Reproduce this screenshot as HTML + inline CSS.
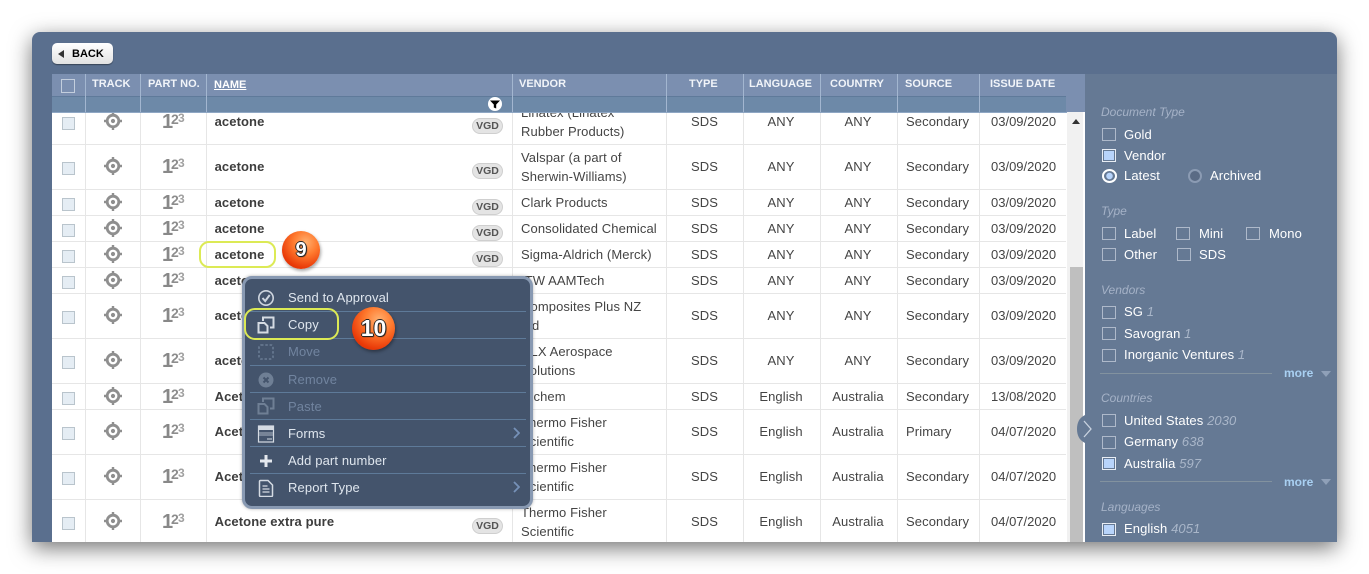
<!DOCTYPE html>
<html><head><meta charset="utf-8"><style>
html,body{margin:0;padding:0;background:#fff;width:1369px;height:574px;overflow:hidden;font-family:"Liberation Sans",Arial,sans-serif}
div,span,svg{position:absolute;box-sizing:border-box}
b span,i span{position:static}
#frame{left:32px;top:32px;width:1305px;height:510px;background:#5a6f8e;border-radius:8px 8px 0 0;box-shadow:0 6px 22px rgba(0,0,0,.55)}
#back{left:52px;top:43px;width:61px;height:21px;background:linear-gradient(#fff,#e2e2e2);border-radius:5px;box-shadow:0 1px 1px rgba(0,0,0,.4);font:bold 11px/21px "Liberation Sans";color:#000;padding:1px 0 0 20px}
#back:before{content:"";position:absolute;left:6px;top:7px;border:4px solid transparent;border-right:6px solid #333;border-left:0}
#wh{left:52px;top:112px;width:1015px;height:430px;background:#fff;overflow:hidden}
.hd{left:52px;top:74px;width:1033px;height:38px;background:#7b8fb0}
.hd2{left:52px;top:96px;width:1014px;height:16px;background:#6d89a8;border-top:1px solid #5f7a9a}
.hl{left:52px;top:112px;width:1015px;height:1px;background:#8fa7c4}
.hs{top:74px;width:1px;height:38px;background:#a3b6d0}
.ht{top:78px;font:bold 11px/13px "Liberation Sans";color:#f1f4f9;white-space:nowrap}
.vl{top:0;width:1px;height:430px;background:#e6e6e6}
.hr{left:0;width:1014px;height:1px;background:#e6e6e6}
.r{left:0;width:1015px;height:16px;margin-top:1px;font:13px/16px "Liberation Sans";letter-spacing:.1px;color:#444}
.r span{white-space:nowrap;top:0}
.cb{left:10px;top:9px;width:13px;height:13px;background:#e5edf4;border:1px solid #b9c4cc}
.tr{left:52px;top:-2px;width:18px;height:18px}
.r .n1{left:110px;top:-1px;font:bold 20px/18px "Liberation Sans";color:#888;letter-spacing:0}
.r .n2{left:119px;top:-2px;font:bold 14px/14px "Liberation Sans";color:#8d8d8d;letter-spacing:0}
.r .n3{left:126px;top:-2px;font:bold 12px/13px "Liberation Sans";color:#a0a0a0;letter-spacing:0}
.nm{left:162.600px;font-weight:bold;color:#3d3d3d}
.vg{left:420px;top:4px;width:31px;height:16px;background:#e4e4e4;border:1px solid #cfcfcf;border-radius:8px;font:bold 10.5px/14px "Liberation Sans";color:#555;text-align:center;letter-spacing:0}
.v{left:469px;top:0!important}
.v2{left:469px;top:-11px!important;line-height:19px}
.ty{left:602.500px;width:100px;text-align:center}
.la{left:679px;width:100px;text-align:center}
.co{left:756px;width:100px;text-align:center}
.so{left:854px}.r .da{left:939px;letter-spacing:0}
#side{left:1085px;top:74px;width:252px;height:468px;background:#657994}
#sb{left:1067px;top:112px;width:18px;height:430px;background:#f1f1f1}
#th{left:1070px;top:267px;width:13px;height:275px;background:#bfbfbf}
#up{left:1072px;top:119px;border:4px solid transparent;border-bottom:5px solid #333;border-top:0}
.h{left:1101px;font:italic 12px/14px "Liberation Sans";color:#a5b2c7;white-space:nowrap}
.l{font:13px/16px "Liberation Sans";letter-spacing:.1px;margin-top:1px;color:#fff;white-space:nowrap}
.l i{color:#a9b6c9}
.c{width:14px;height:13px;border:1px solid #aeb9ca}
.c.on{border-color:#e8edf4;background:#b8d4fb;box-shadow:inset 0 0 0 1px #657994}
.ln{left:1100px;width:172px;height:1px;background:#82929f}
.m{left:1284px;font:bold 12px/14px "Liberation Sans";color:#a9d0f2}
.a{left:1321px;border:5px solid transparent;border-top:6px solid #8fa0b8;border-bottom:0}
#menu{left:242px;top:276px;width:291px;height:233px;background:#44546c;border:3px solid #8899b2;border-radius:10px;box-shadow:0 0 3px rgba(0,0,0,.3)}
.sp{left:250px;width:276px;height:1px;background:#5e7a99}
.mi{left:288px;font:13px/16px "Liberation Sans";letter-spacing:.12px;margin-top:1px;color:#dfe6ee;white-space:nowrap}
.mi.d{color:#71849f}
.ic{left:257px;width:18px;height:18px}
.ch{left:513px;width:7px;height:12px}
.hi{border:2px solid #dcea55;border-radius:10px}
.bd{border-radius:50%;background:radial-gradient(circle at 62% 30%,#ffb070 0,#ff7a2e 35%,#e93a08 72%,#c92400 100%);box-shadow:1px 2px 3px rgba(0,0,0,.35);color:#fff;font-weight:bold;text-align:center;text-shadow:-1px 0 #222,1px 0 #222,0 -1px #222,0 1px #222,1px 1px 1px #222}
</style></head><body>
<svg width="0" height="0" style="left:0;top:0"><defs>
<symbol id="t" viewBox="0 0 18 18"><circle cx="9" cy="9" r="5.800" fill="none" stroke="#8f8f8f" stroke-width="2.800"/><circle cx="9" cy="9" r="2.100" fill="#8f8f8f"/><path d="M9 0v3.500M9 14.500V18M0 9h3.500M14.500 9H18" stroke="#8f8f8f" stroke-width="2.400"/></symbol>
<symbol id="cp" viewBox="0 0 18 18"><path d="M1.500 7h6l3 3v6.500h-9z" fill="none" stroke="currentColor" stroke-width="2"/><path d="M6 5V1.500h6l4.500 0v10h-3.500" fill="none" stroke="currentColor" stroke-width="2"/></symbol>
</defs></svg>
<div id="frame"></div>
<div id="back">BACK</div>
<div id="wh">
<div class="vl" style="left:33px"></div><div class="vl" style="left:88px"></div><div class="vl" style="left:154px"></div><div class="vl" style="left:460px"></div><div class="vl" style="left:614px"></div><div class="vl" style="left:691px"></div><div class="vl" style="left:768px"></div><div class="vl" style="left:845px"></div><div class="vl" style="left:927px"></div>
<div class="hr" style="top:32px"></div><div class="hr" style="top:77px"></div><div class="hr" style="top:103px"></div><div class="hr" style="top:129px"></div><div class="hr" style="top:155px"></div><div class="hr" style="top:181px"></div><div class="hr" style="top:226px"></div><div class="hr" style="top:271px"></div><div class="hr" style="top:297px"></div><div class="hr" style="top:342px"></div><div class="hr" style="top:387px"></div>

<div class="r" style="top:1px"><div class="cb" style="top:3px"></div><svg class="tr"><use href="#t"/></svg><span class="n1">1</span><span class="n2">2</span><span class="n3">3</span><span class="nm">acetone</span><div class="vg">VGD</div><span class="v2">Linatex (Linatex<br>Rubber Products)</span><span class="ty">SDS</span><span class="la">ANY</span><span class="co">ANY</span><span class="so">Secondary</span><span class="da">03/09/2020</span></div>
<div class="r" style="top:46px"><div class="cb" style="top:3px"></div><svg class="tr"><use href="#t"/></svg><span class="n1">1</span><span class="n2">2</span><span class="n3">3</span><span class="nm">acetone</span><div class="vg">VGD</div><span class="v2">Valspar (a part of<br>Sherwin-Williams)</span><span class="ty">SDS</span><span class="la">ANY</span><span class="co">ANY</span><span class="so">Secondary</span><span class="da">03/09/2020</span></div>
<div class="r" style="top:82px"><div class="cb" style="top:3px"></div><svg class="tr"><use href="#t"/></svg><span class="n1">1</span><span class="n2">2</span><span class="n3">3</span><span class="nm">acetone</span><div class="vg">VGD</div><span class="v">Clark Products</span><span class="ty">SDS</span><span class="la">ANY</span><span class="co">ANY</span><span class="so">Secondary</span><span class="da">03/09/2020</span></div>
<div class="r" style="top:108px"><div class="cb" style="top:3px"></div><svg class="tr"><use href="#t"/></svg><span class="n1">1</span><span class="n2">2</span><span class="n3">3</span><span class="nm">acetone</span><div class="vg">VGD</div><span class="v">Consolidated Chemical</span><span class="ty">SDS</span><span class="la">ANY</span><span class="co">ANY</span><span class="so">Secondary</span><span class="da">03/09/2020</span></div>
<div class="r" style="top:134px"><div class="cb" style="top:3px"></div><svg class="tr"><use href="#t"/></svg><span class="n1">1</span><span class="n2">2</span><span class="n3">3</span><span class="nm">acetone</span><div class="vg">VGD</div><span class="v">Sigma-Aldrich (Merck)</span><span class="ty">SDS</span><span class="la">ANY</span><span class="co">ANY</span><span class="so">Secondary</span><span class="da">03/09/2020</span></div>
<div class="r" style="top:160px"><div class="cb" style="top:3px"></div><svg class="tr"><use href="#t"/></svg><span class="n1">1</span><span class="n2">2</span><span class="n3">3</span><span class="nm">acetone</span><span class="v">ITW AAMTech</span><span class="ty">SDS</span><span class="la">ANY</span><span class="co">ANY</span><span class="so">Secondary</span><span class="da">03/09/2020</span></div>
<div class="r" style="top:195px"><div class="cb" style="top:3px"></div><svg class="tr"><use href="#t"/></svg><span class="n1">1</span><span class="n2">2</span><span class="n3">3</span><span class="nm">acetone</span><span class="v2">Composites Plus NZ<br>Ltd</span><span class="ty">SDS</span><span class="la">ANY</span><span class="co">ANY</span><span class="so">Secondary</span><span class="da">03/09/2020</span></div>
<div class="r" style="top:240px"><div class="cb" style="top:3px"></div><svg class="tr"><use href="#t"/></svg><span class="n1">1</span><span class="n2">2</span><span class="n3">3</span><span class="nm">acetone</span><span class="v2">ULX Aerospace<br>Solutions</span><span class="ty">SDS</span><span class="la">ANY</span><span class="co">ANY</span><span class="so">Secondary</span><span class="da">03/09/2020</span></div>
<div class="r" style="top:276px"><div class="cb" style="top:3px"></div><svg class="tr"><use href="#t"/></svg><span class="n1">1</span><span class="n2">2</span><span class="n3">3</span><span class="nm">Acetone</span><span class="v">Ulchem</span><span class="ty">SDS</span><span class="la">English</span><span class="co">Australia</span><span class="so">Secondary</span><span class="da">13/08/2020</span></div>
<div class="r" style="top:311px"><div class="cb" style="top:3px"></div><svg class="tr"><use href="#t"/></svg><span class="n1">1</span><span class="n2">2</span><span class="n3">3</span><span class="nm">Acetone</span><span class="v2">Thermo Fisher<br>Scientific</span><span class="ty">SDS</span><span class="la">English</span><span class="co">Australia</span><span class="so">Primary</span><span class="da">04/07/2020</span></div>
<div class="r" style="top:356px"><div class="cb" style="top:3px"></div><svg class="tr"><use href="#t"/></svg><span class="n1">1</span><span class="n2">2</span><span class="n3">3</span><span class="nm">Acetone</span><span class="v2">Thermo Fisher<br>Scientific</span><span class="ty">SDS</span><span class="la">English</span><span class="co">Australia</span><span class="so">Secondary</span><span class="da">04/07/2020</span></div>
<div class="r" style="top:401px"><div class="cb" style="top:3px"></div><svg class="tr"><use href="#t"/></svg><span class="n1">1</span><span class="n2">2</span><span class="n3">3</span><span class="nm">Acetone extra pure</span><div class="vg">VGD</div><span class="v2">Thermo Fisher<br>Scientific</span><span class="ty">SDS</span><span class="la">English</span><span class="co">Australia</span><span class="so">Secondary</span><span class="da">04/07/2020</span></div>
</div>
<div class="hd"></div><div class="hd2"></div><div class="hl"></div>
<div class="hs" style="left:85px"></div><div class="hs" style="left:140px"></div><div class="hs" style="left:206px"></div><div class="hs" style="left:512px"></div><div class="hs" style="left:666px"></div><div class="hs" style="left:743px"></div><div class="hs" style="left:820px"></div><div class="hs" style="left:897px"></div><div class="hs" style="left:979px"></div>
<div style="left:61px;top:79px;width:14px;height:14px;border:1px solid #c3cedd"></div>
<span class="ht" style="left:92px">TRACK</span><span class="ht" style="left:148px">PART NO.</span><span class="ht" style="left:214px;top:79px;text-decoration:underline;color:#fff">NAME</span><span class="ht" style="left:519px">VENDOR</span><span class="ht" style="left:689px">TYPE</span><span class="ht" style="left:749px">LANGUAGE</span><span class="ht" style="left:830px">COUNTRY</span><span class="ht" style="left:905px">SOURCE</span><span class="ht" style="left:990px">ISSUE DATE</span>
<svg style="left:488px;top:97px" width="14" height="14" viewBox="0 0 14 14"><circle cx="7" cy="7" r="7" fill="#fff"/><path d="M2 3.500h10L8.200 7.500v4L5.800 10.500v-3z" fill="#000"/></svg>
<div id="sb"></div><div id="th"></div><div id="up"></div><div style="left:1083px;top:112px;width:2px;height:430px;background:#fff"></div>
<div id="side"></div>
<svg style="left:1077px;top:415px" width="20" height="28" viewBox="0 0 20 28"><path d="M8 0C2 3 0 8 0 14s2 11 8 14h12V0z" fill="#657994"/><path d="M7 6l7 8-7 8" fill="none" stroke="#c9d3e0" stroke-width="1.300"/></svg>

<div class="h" style="top:105px">Document Type</div>
<div class="c" style="left:1102px;top:128px"></div><span class="l" style="left:1124px;top:126px">Gold</span>
<div class="c on" style="left:1102px;top:149px"></div><span class="l" style="left:1124px;top:147px">Vendor</span>
<div style="left:1102px;top:169px;width:15px;height:14px;border:2px solid #fff;border-radius:50%;background:radial-gradient(circle,#b8d4fb 0 3px,#657994 3.500px)"></div><span class="l" style="left:1124px;top:167px">Latest</span>
<div style="left:1188px;top:169px;width:14px;height:14px;border:2px solid #8b9bb3;border-radius:50%;background:#5a6b85"></div><span class="l" style="left:1210px;top:167px">Archived</span>
<div class="h" style="top:204px">Type</div>
<div class="c" style="left:1102px;top:227px"></div><span class="l" style="left:1124px;top:225px">Label</span>
<div class="c" style="left:1176px;top:227px"></div><span class="l" style="left:1199px;top:225px">Mini</span>
<div class="c" style="left:1246px;top:227px"></div><span class="l" style="left:1269px;top:225px">Mono</span>
<div class="c" style="left:1102px;top:248px"></div><span class="l" style="left:1124px;top:246px">Other</span>
<div class="c" style="left:1177px;top:248px"></div><span class="l" style="left:1199px;top:246px">SDS</span>
<div class="h" style="top:283px">Vendors</div>
<div class="c" style="left:1102px;top:306px"></div><span class="l" style="left:1124px;top:303px">SG <i>1</i></span>
<div class="c" style="left:1102px;top:327px"></div><span class="l" style="left:1124px;top:325px">Savogran <i>1</i></span>
<div class="c" style="left:1102px;top:349px"></div><span class="l" style="left:1124px;top:346px">Inorganic Ventures <i>1</i></span>
<div class="ln" style="top:373px"></div><span class="m" style="top:366px">more</span><div class="a" style="top:371px"></div>
<div class="h" style="top:391px">Countries</div>
<div class="c" style="left:1102px;top:414px"></div><span class="l" style="left:1124px;top:412px">United States <i>2030</i></span>
<div class="c" style="left:1102px;top:436px"></div><span class="l" style="left:1124px;top:433px">Germany <i>638</i></span>
<div class="c on" style="left:1102px;top:457px"></div><span class="l" style="left:1124px;top:455px">Australia <i>597</i></span>
<div class="ln" style="top:481px"></div><span class="m" style="top:475px">more</span><div class="a" style="top:479px"></div>
<div class="h" style="top:500px">Languages</div>
<div class="c on" style="left:1102px;top:523px"></div><span class="l" style="left:1124px;top:520px">English <i>4051</i></span>

<div class="hi" style="left:199px;top:241px;width:77px;height:27px"></div>
<div class="bd" style="left:282px;top:231px;width:38px;height:38px;font-size:20px;line-height:38px">9</div>

<div id="menu"></div>
<div class="sp" style="top:311px"></div><div class="sp" style="top:338px"></div><div class="sp" style="top:365px"></div><div class="sp" style="top:392px"></div><div class="sp" style="top:419px"></div><div class="sp" style="top:446px"></div><div class="sp" style="top:473px"></div>
<span class="mi" style="top:289px">Send to Approval</span>
<span class="mi" style="top:316px">Copy</span>
<span class="mi d" style="top:343px">Move</span>
<span class="mi d" style="top:371px">Remove</span>
<span class="mi d" style="top:398px">Paste</span>
<span class="mi" style="top:425px">Forms</span>
<span class="mi" style="top:452px">Add part number</span>
<span class="mi" style="top:479px">Report Type</span>
<svg class="ic" style="top:289px" viewBox="0 0 18 18"><circle cx="9" cy="9" r="7.200" fill="none" stroke="#cfd6df" stroke-width="1.600"/><path d="M5.500 9l2.700 3 4.500-6" fill="none" stroke="#cfd6df" stroke-width="2"/></svg>
<svg class="ic" style="top:316px;color:#d5dbe3"><use href="#cp"/></svg>
<svg class="ic" style="top:343px" viewBox="0 0 18 18"><rect x="2" y="2" width="14" height="14" rx="2" fill="none" stroke="#65778f" stroke-width="1.800" stroke-dasharray="2.500 1.800"/></svg>
<svg class="ic" style="top:371px" viewBox="0 0 18 18"><circle cx="9" cy="9" r="7.500" fill="#6f7f95"/><path d="M6.500 6.500l5 5M11.500 6.500l-5 5" stroke="#44546c" stroke-width="2"/></svg>
<svg class="ic" style="top:397px;color:#6f7f95"><use href="#cp"/></svg>
<svg class="ic" style="top:425px" viewBox="0 0 18 18"><rect x="1.500" y="1" width="15" height="16" fill="none" stroke="#d5dbe3" stroke-width="1.200"/><rect x="1.500" y="1" width="15" height="4" fill="#d5dbe3"/><path d="M2 8h14M2 10h14" stroke="#aab4c2"/><path d="M10 14h5" stroke="#d5dbe3"/></svg>
<svg class="ic" style="top:452px" viewBox="0 0 18 18"><path d="M9 3v12M3 9h12" stroke="#e4e8ee" stroke-width="3"/></svg>
<svg class="ic" style="top:479px" viewBox="0 0 18 18"><path d="M2.500 2.500a1 1 0 0 1 1-1H11l4.500 4.500v10.500a1 1 0 0 1-1 1h-11a1 1 0 0 1-1-1z" fill="none" stroke="#d5dbe3" stroke-width="1.500"/><path d="M5.500 7h5M5.500 10h7M5.500 13h7" stroke="#d5dbe3" stroke-width="1.300"/></svg>
<svg class="ch" style="top:427px" viewBox="0 0 7 12"><path d="M1 1l5 5-5 5" fill="none" stroke="#7691b8" stroke-width="1.800"/></svg>
<svg class="ch" style="top:481px" viewBox="0 0 7 12"><path d="M1 1l5 5-5 5" fill="none" stroke="#7691b8" stroke-width="1.800"/></svg>
<div class="hi" style="left:244px;top:308px;width:95px;height:32px;border-radius:11px"></div>
<div class="bd" style="left:352px;top:307px;width:43px;height:43px;font-size:23px;line-height:43px">10</div>
</body></html>
